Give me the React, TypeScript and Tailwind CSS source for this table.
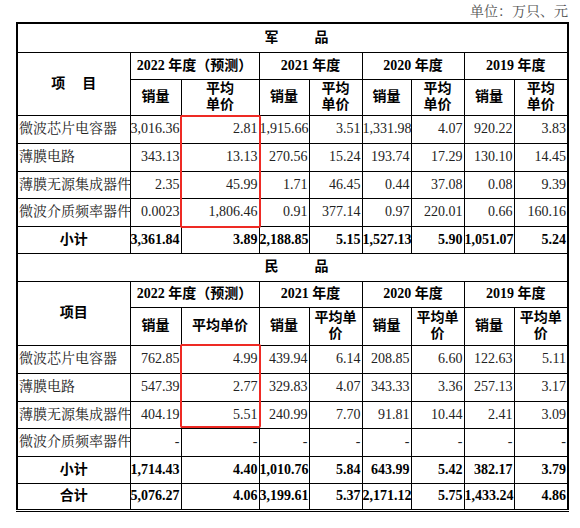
import React from "react";

type Row = { name: string; values: string[] };

const military: Row[] = [
	{ name: "微波芯片电容器", values: ["3,016.36", "2.81", "1,915.66", "3.51", "1,331.98", "4.07", "920.22", "3.83"] },
	{ name: "薄膜电路", values: ["343.13", "13.13", "270.56", "15.24", "193.74", "17.29", "130.10", "14.45"] },
	{ name: "薄膜无源集成器件", values: ["2.35", "45.99", "1.71", "46.45", "0.44", "37.08", "0.08", "9.39"] },
	{ name: "微波介质频率器件", values: ["0.0023", "1,806.46", "0.91", "377.14", "0.97", "220.01", "0.66", "160.16"] },
];
const militaryTotal = ["3,361.84", "3.89", "2,188.85", "5.15", "1,527.13", "5.90", "1,051.07", "5.24"];

const civil: Row[] = [
	{ name: "微波芯片电容器", values: ["762.85", "4.99", "439.94", "6.14", "208.85", "6.60", "122.63", "5.11"] },
	{ name: "薄膜电路", values: ["547.39", "2.77", "329.83", "4.07", "343.33", "3.36", "257.13", "3.17"] },
	{ name: "薄膜无源集成器件", values: ["404.19", "5.51", "240.99", "7.70", "91.81", "10.44", "2.41", "3.09"] },
	{ name: "微波介质频率器件", values: ["-", "-", "-", "-", "-", "-", "-", "-"] },
];
const civilTotal = ["1,714.43", "4.40", "1,010.76", "5.84", "643.99", "5.42", "382.17", "3.79"];
const grandTotal = ["5,076.27", "4.06", "3,199.61", "5.37", "2,171.12", "5.75", "1,433.24", "4.86"];

const td = "border border-black p-0";
const num = `${td} text-right pr-px whitespace-nowrap`;
// bold headings: Times-like digits, heavy sans for the Chinese (黑体 look)
const bold = "font-bold font-['Liberation_Serif','Noto_Sans_CJK_SC',sans-serif]";

const YearRow = ({ first }: { first: React.ReactNode }) => (
	<>
		<td rowSpan={2} className={`${td} ${bold} text-center`}>
			{first}
		</td>
		<td colSpan={2} className={`${td} ${bold} text-center`}>
			2022 年度（预测）
		</td>
		<td colSpan={2} className={`${td} ${bold} text-center`}>
			2021 年度
		</td>
		<td colSpan={2} className={`${td} ${bold} text-center`}>
			2020 年度
		</td>
		<td colSpan={2} className={`${td} ${bold} text-center`}>
			2019 年度
		</td>
	</>
);

const DataRows = ({ rows }: { rows: Row[] }) => (
	<>
		{rows.map((r, i) => (
			<tr key={r.name} className={i === 2 ? "h-[27px]" : "h-[28px]"}>
				<td className={`${td} pl-px text-left whitespace-nowrap text-[#222]`}>{r.name}</td>
				{r.values.map((v, j) => (
					<td key={j} className={`${num} text-[#222]`}>
						{v}
					</td>
				))}
			</tr>
		))}
	</>
);

const TotalRow = ({ label, values, last }: { label: string; values: string[]; last?: boolean }) => {
	const edge = last ? "border-b-[3px] border-b-black border-double" : "";
	return (
		<tr className={`h-[27px] ${bold}`}>
			<td className={`${td} ${edge} text-center`}>{label}</td>
			{values.map((v, j) => (
				<td key={j} className={`${num} ${edge}`}>
					{v}
				</td>
			))}
		</tr>
	);
};

const Price = ({ lines }: { lines: string[] }) => (
	<td className={td}>
		{lines[0]}
		{lines[1] && (
			<>
				<br />
				{lines[1]}
			</>
		)}
	</td>
);

export default function App() {
	return (
		<div className="relative w-[580px] h-[528px] bg-white text-black font-['Liberation_Serif','Noto_Serif_CJK_SC','Noto_Sans_CJK_SC',serif] text-[14px] leading-[16px]">
			<div className="w-[568px] h-[22px] pt-[4px] text-right text-[#555]">单位：万只、元</div>
			<div className="pl-[16px]">
				<table className="table-fixed border-collapse border-2 border-black w-[551px]">
					<colgroup>
						<col className="w-[113px]" />
						<col className="w-[51px]" />
						<col className="w-[78px]" />
						<col className="w-[50px]" />
						<col className="w-[53px]" />
						<col className="w-[49px]" />
						<col className="w-[53px]" />
						<col className="w-[50px]" />
						<col className="w-[54px]" />
					</colgroup>
					<tbody>
						<tr className="h-[29px]">
							<td colSpan={9} className={`${td} ${bold}`}>
								<div className="flex justify-center gap-[36px] pl-[8px]">
									<span>军</span>
									<span>品</span>
								</div>
							</td>
						</tr>
						<tr className="h-[27px]">
							<YearRow
								first={
									<div className="flex justify-center gap-[17px]">
										<span>项</span>
										<span>目</span>
									</div>
								}
							/>
						</tr>
						<tr className={`h-[36px] text-center ${bold}`}>
							<td className={td}>销量</td>
							<Price lines={["平均", "单价"]} />
							<td className={td}>销量</td>
							<Price lines={["平均", "单价"]} />
							<td className={td}>销量</td>
							<Price lines={["平均", "单价"]} />
							<td className={td}>销量</td>
							<Price lines={["平均", "单价"]} />
						</tr>
						<DataRows rows={military} />
						<TotalRow label="小计" values={militaryTotal} />

						<tr className="h-[28px]">
							<td colSpan={9} className={`${td} ${bold}`}>
								<div className="flex justify-center gap-[36px] pl-[8px]">
									<span>民</span>
									<span>品</span>
								</div>
							</td>
						</tr>
						<tr className="h-[26px]">
							<YearRow first="项目" />
						</tr>
						<tr className={`h-[38px] text-center ${bold}`}>
							<td className={td}>销量</td>
							<Price lines={["平均单价"]} />
							<td className={td}>销量</td>
							<Price lines={["平均单", "价"]} />
							<td className={td}>销量</td>
							<Price lines={["平均单", "价"]} />
							<td className={td}>销量</td>
							<Price lines={["平均单", "价"]} />
						</tr>
						<DataRows rows={civil} />
						<TotalRow label="小计" values={civilTotal} />
						<TotalRow label="合计" values={grandTotal} last />
					</tbody>
				</table>
			</div>

			{/* red highlight boxes */}
			<div className="absolute left-[180px] top-[115px] w-[81px] h-[113px] border-2 border-[#ee2a24] rounded-[2px]" />
			<div className="absolute left-[180px] top-[344px] w-[81px] h-[84px] border-2 border-[#ee2a24] rounded-[2px]" />
		</div>
	);
}
